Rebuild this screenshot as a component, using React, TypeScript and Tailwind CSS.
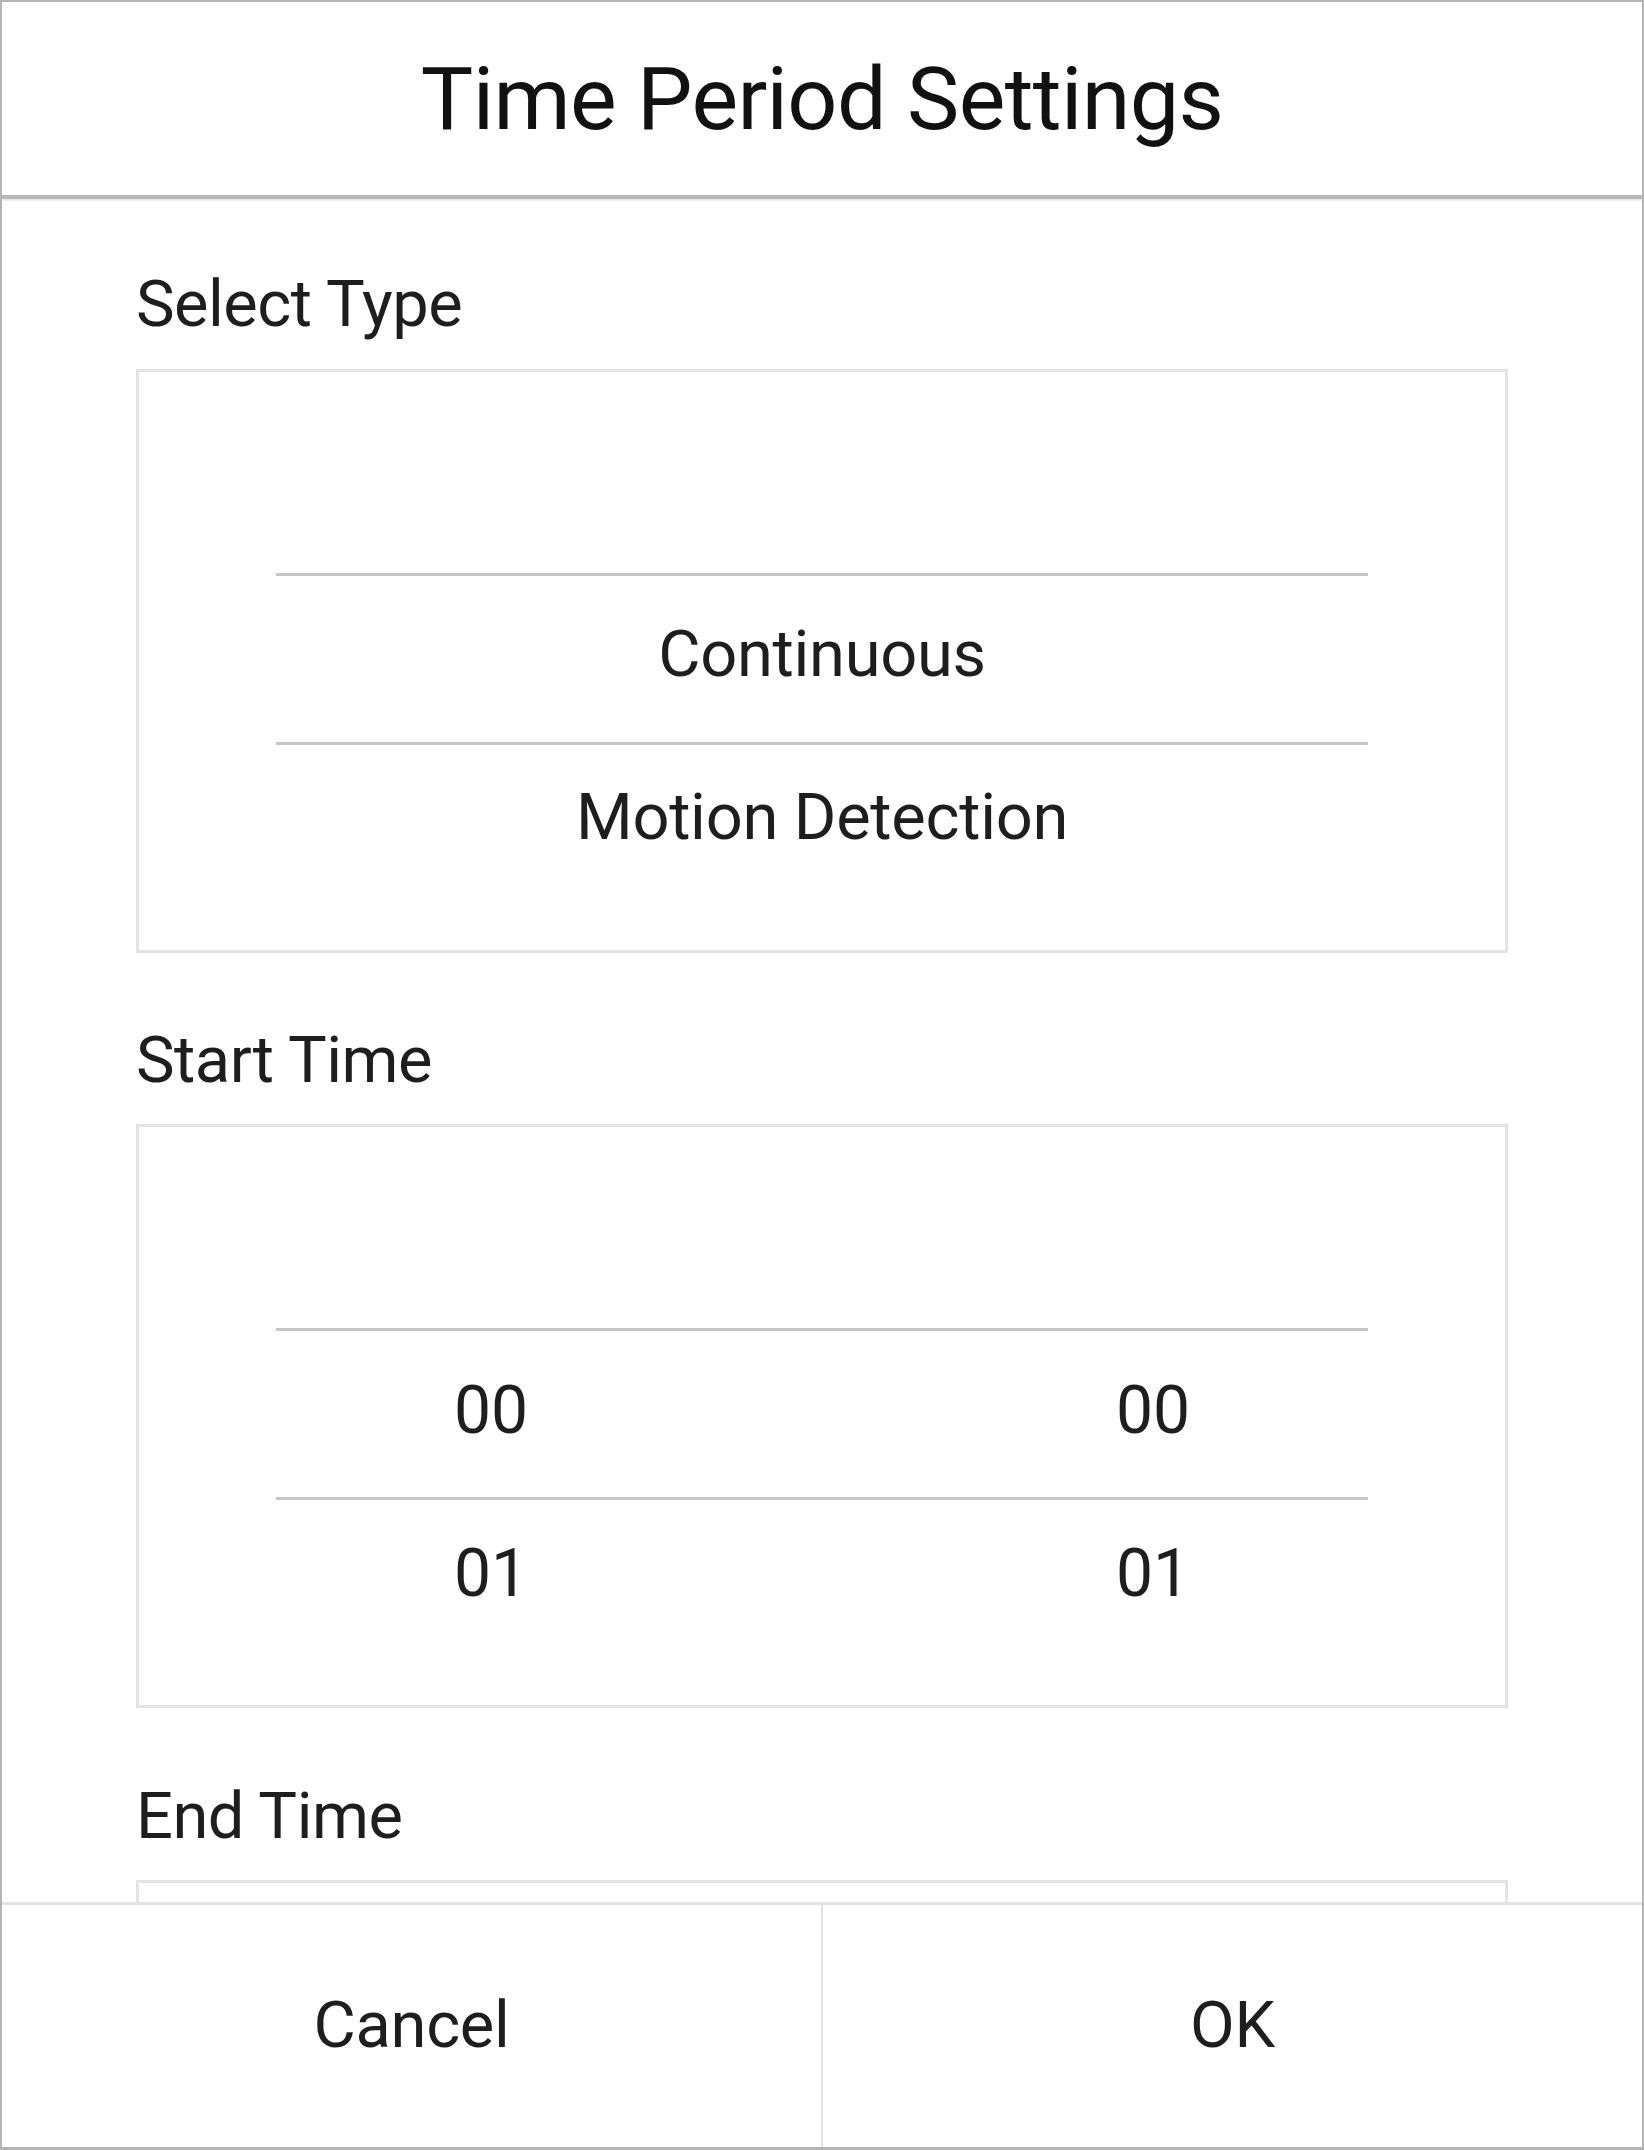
import React from "react";

const pickerLine = "h-[3px] w-full bg-[#c6c6c6]";
const boxClass = "h-[584px] w-full border-[3px] border-[#e3e3e3] px-[137px] pt-[201px]";

const Label = ({ text, className = "" }: { text: string; className?: string }) => (
  <div className={`text-[65px] leading-[80px] tracking-[-0.5px] text-[#1e1e1e] ${className}`}>{text}</div>
);

const TypePicker = () => (
  <div className={boxClass}>
    <div className={pickerLine} />
    <div className="flex h-[166px] items-center justify-center pb-[8px] text-[65px] tracking-[-0.3px] text-[#1e1e1e]">
      Continuous
    </div>
    <div className={pickerLine} />
    <div className="flex h-[146px] items-center justify-center text-[65px] tracking-[-0.3px] text-[#1e1e1e]">
      Motion Detection
    </div>
  </div>
);

const TimePicker = () => {
  const row = (a: string, b: string, extra: string) => (
    <div className={`flex items-center justify-center gap-[232px] text-[66px] text-[#1e1e1e] ${extra}`}>
      <span className="w-[430px] text-center">{a}</span>
      <span className="w-[430px] text-center">{b}</span>
    </div>
  );

  return (
    <div className={boxClass}>
      <div className={pickerLine} />
      {row("00", "00", "h-[166px] pb-[8px]")}
      <div className={pickerLine} />
      {row("01", "01", "h-[146px]")}
    </div>
  );
};

export default function App() {
  return (
    <div className="flex h-[2150px] w-[1644px] flex-col overflow-hidden border-2 border-b-[3px] border-[#b3b3b3] bg-white font-[Roboto,sans-serif]">
      <div className="flex h-[193px] shrink-0 items-center justify-center text-[88px] tracking-[-0.65px] text-[#111111]">
        Time Period Settings
      </div>
      <div className="h-[4px] shrink-0 bg-[#b9b9b9] shadow-[0_1px_3px_rgba(0,0,0,0.15)]" />

      <div className="flex-1 overflow-hidden px-[134px] pt-[65px]">
        <Label text="Select Type" className="mb-[25px]" />
        <TypePicker />

        <Label text="Start Time" className="mb-[24px] mt-[67px]" />
        <TimePicker />

        <Label text="End Time" className="mb-[24px] mt-[68px]" />
        {/* end time picker is scrolled below the fold, only its top edge shows */}
        <div className="h-[584px] w-full border-[3px] border-[#e3e3e3]" />
      </div>

      <div className="flex h-[245px] shrink-0 border-t-[3px] border-[#e2e2e2] text-[65px] tracking-[-0.3px] text-[#1e1e1e]">
        <button className="flex flex-1 items-center justify-center border-r-2 border-[#e0e0e0]">
          Cancel
        </button>
        <button className="flex flex-1 items-center justify-center">OK</button>
      </div>
    </div>
  );
}
